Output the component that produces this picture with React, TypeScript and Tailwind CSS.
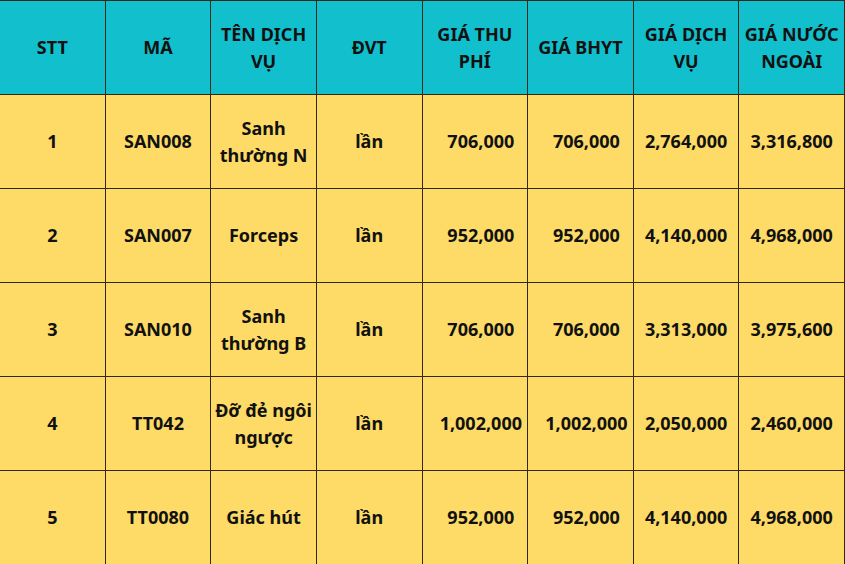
import React from "react";

type Row = {
  stt: string;
  ma: string;
  ten: string[];
  dvt: string;
  thuPhi: string;
  bhyt: string;
  dichVu: string;
  nuocNgoai: string;
};

const headers: string[][] = [
  ["STT"],
  ["MÃ"],
  ["TÊN DỊCH", "VỤ"],
  ["ĐVT"],
  ["GIÁ THU", "PHÍ"],
  ["GIÁ BHYT"],
  ["GIÁ DỊCH", "VỤ"],
  ["GIÁ NƯỚC", "NGOÀI"],
];

const rows: Row[] = [
  { stt: "1", ma: "SAN008", ten: ["Sanh", "thường N"], dvt: "lần", thuPhi: "706,000", bhyt: "706,000", dichVu: "2,764,000", nuocNgoai: "3,316,800" },
  { stt: "2", ma: "SAN007", ten: ["Forceps"], dvt: "lần", thuPhi: "952,000", bhyt: "952,000", dichVu: "4,140,000", nuocNgoai: "4,968,000" },
  { stt: "3", ma: "SAN010", ten: ["Sanh", "thường B"], dvt: "lần", thuPhi: "706,000", bhyt: "706,000", dichVu: "3,313,000", nuocNgoai: "3,975,600" },
  { stt: "4", ma: "TT042", ten: ["Đỡ đẻ ngôi", "ngược"], dvt: "lần", thuPhi: "1,002,000", bhyt: "1,002,000", dichVu: "2,050,000", nuocNgoai: "2,460,000" },
  { stt: "5", ma: "TT0080", ten: ["Giác hút"], dvt: "lần", thuPhi: "952,000", bhyt: "952,000", dichVu: "4,140,000", nuocNgoai: "4,968,000" },
];

function Cell({ lines, className = "" }: { lines: string[]; className?: string }) {
  return (
    <div className={`flex h-[94px] flex-col items-center justify-center border-r border-b border-[#2e2a17] text-center leading-[27px] ${className}`}>
      {lines.map((l, i) => (
        <span key={i} className="whitespace-nowrap">{l}</span>
      ))}
    </div>
  );
}

export default function App() {
  return (
    <div
      className="w-[845px] h-[564px] overflow-hidden bg-[#fddb66] text-[18px] font-bold text-[#111111]"
      style={{ fontFamily: '"Noto Sans", "DejaVu Sans", sans-serif' }}
    >
      <div className="grid grid-cols-8 border-t border-[#2e2a17]">
        {headers.map((h, i) => (
          <Cell key={i} lines={h} className="h-[93px] bg-[#12bfcc] leading-[26px]" />
        ))}
        {rows.map((r) => (
          <React.Fragment key={r.stt}>
            <Cell lines={[r.stt]} />
            <Cell lines={[r.ma]} />
            <Cell lines={r.ten} />
            <Cell lines={[r.dvt]} />
            <Cell lines={[r.thuPhi]} className="pl-3" />
            <Cell lines={[r.bhyt]} className="pl-3" />
            <Cell lines={[r.dichVu]} />
            <Cell lines={[r.nuocNgoai]} />
          </React.Fragment>
        ))}
      </div>
    </div>
  );
}
